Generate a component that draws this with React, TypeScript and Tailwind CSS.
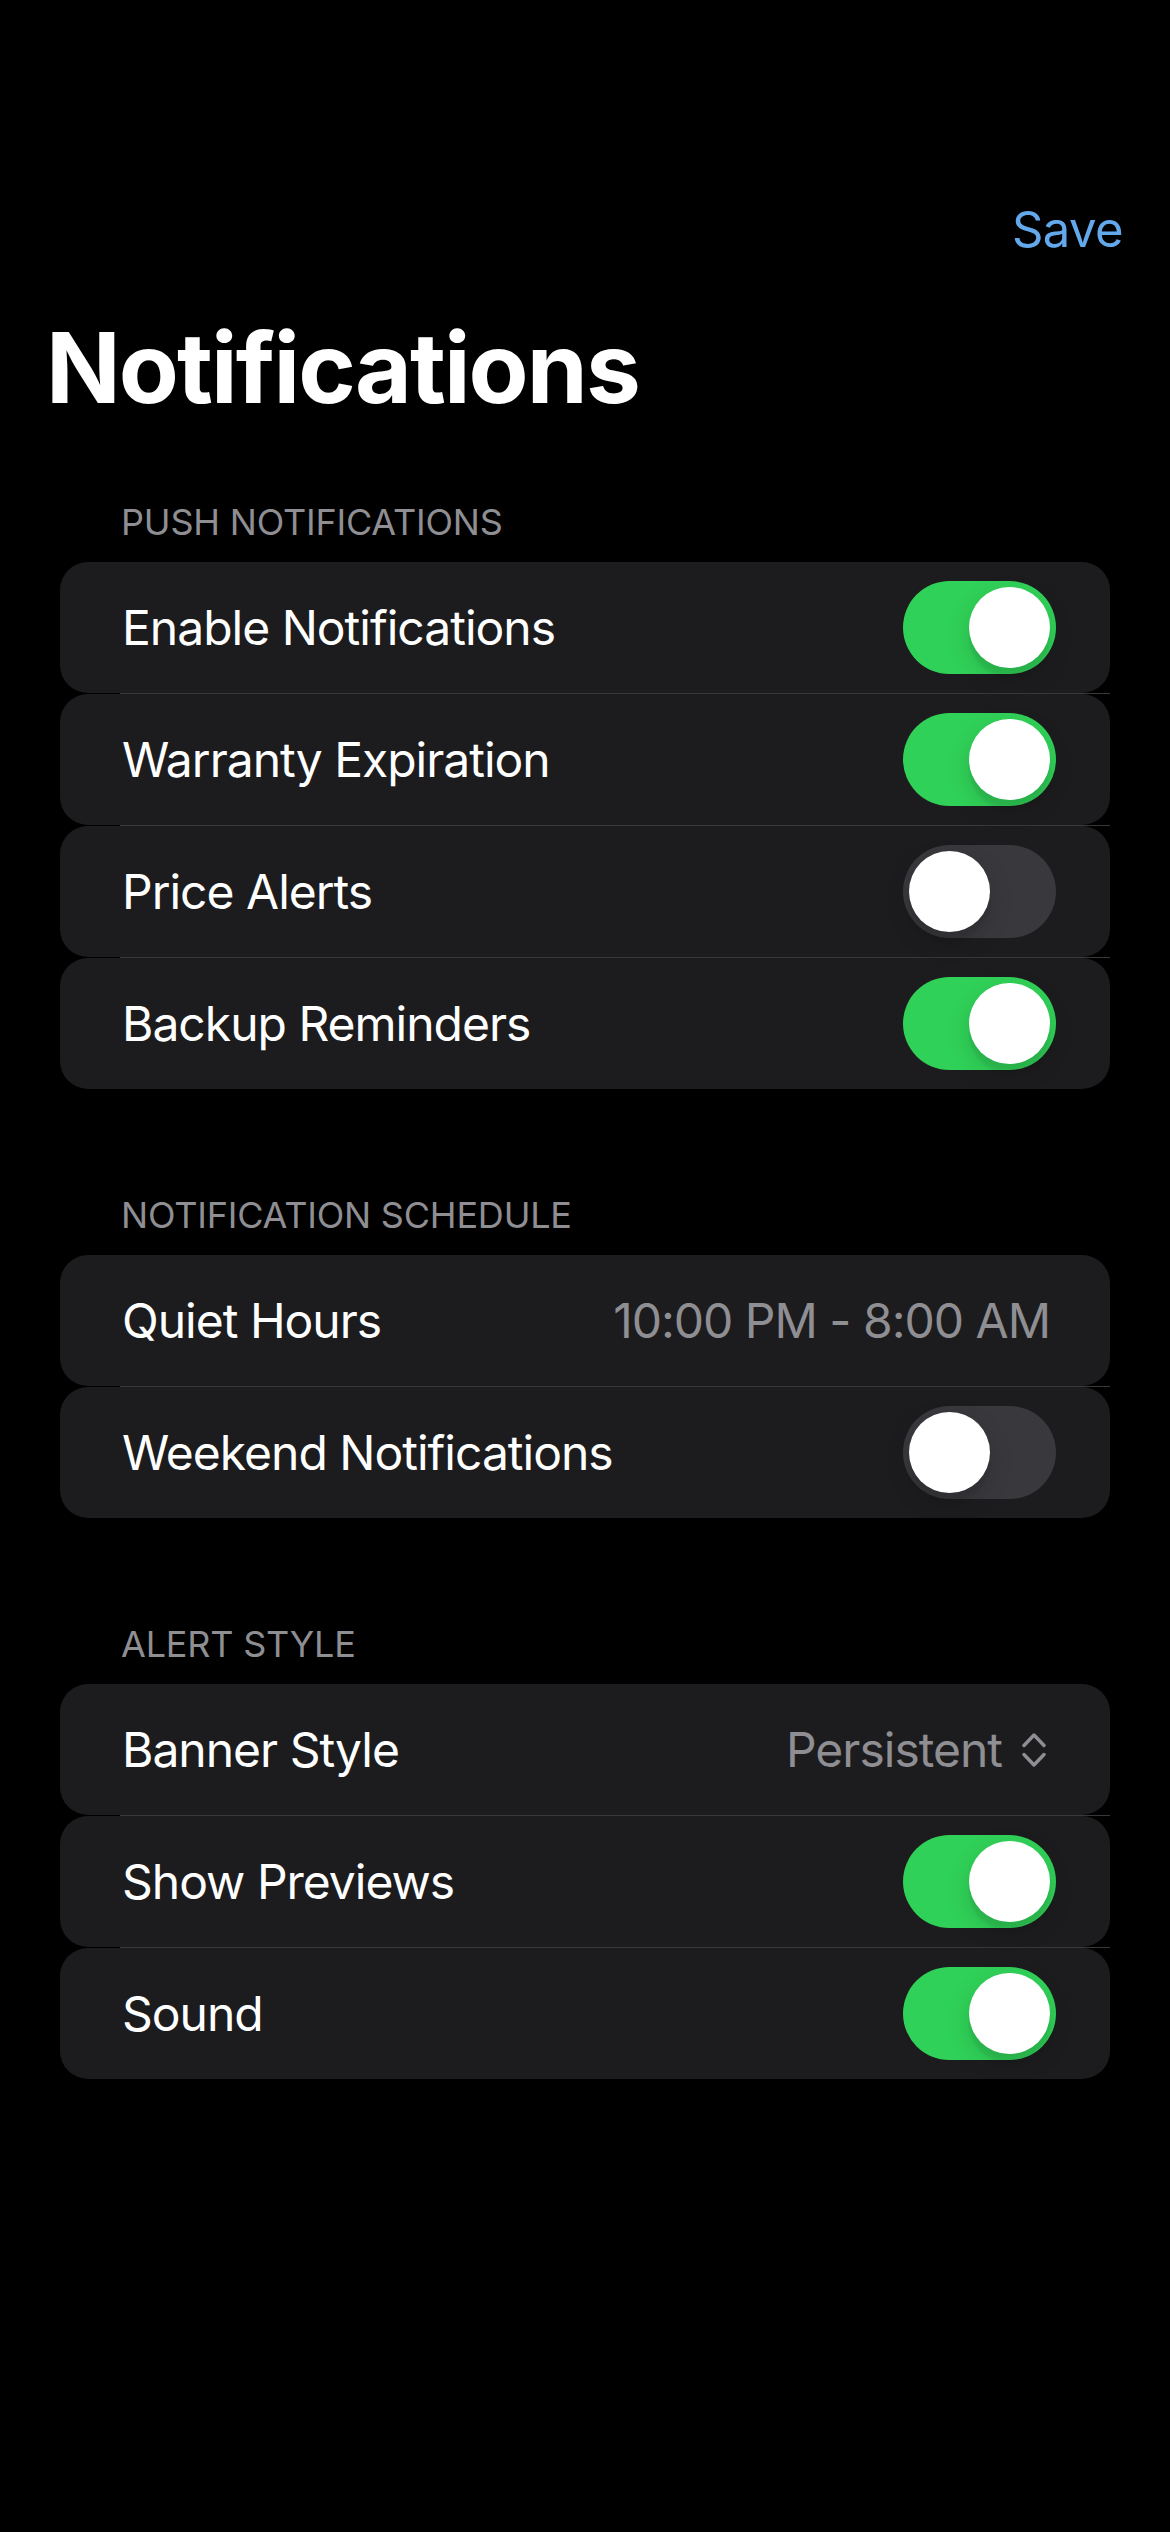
import { useState } from 'react'

type Row =
  | { kind: 'toggle'; label: string; on: boolean }
  | { kind: 'value'; label: string; value: string }
  | { kind: 'picker'; label: string; value: string }

const sections: { title: string; rows: Row[] }[] = [
  {
    title: 'PUSH NOTIFICATIONS',
    rows: [
      { kind: 'toggle', label: 'Enable Notifications', on: true },
      { kind: 'toggle', label: 'Warranty Expiration', on: true },
      { kind: 'toggle', label: 'Price Alerts', on: false },
      { kind: 'toggle', label: 'Backup Reminders', on: true },
    ],
  },
  {
    title: 'NOTIFICATION SCHEDULE',
    rows: [
      { kind: 'value', label: 'Quiet Hours', value: '10:00 PM - 8:00 AM' },
      { kind: 'toggle', label: 'Weekend Notifications', on: false },
    ],
  },
  {
    title: 'ALERT STYLE',
    rows: [
      { kind: 'picker', label: 'Banner Style', value: 'Persistent' },
      { kind: 'toggle', label: 'Show Previews', on: true },
      { kind: 'toggle', label: 'Sound', on: true },
    ],
  },
]

function Toggle({ initial }: { initial: boolean }) {
  const [on, setOn] = useState(initial)
  return (
    <button
      type="button"
      role="switch"
      aria-checked={on}
      onClick={() => setOn(!on)}
      className={'relative flex h-[93px] w-[153px] shrink-0 items-center rounded-full px-[6px] ' + (on ? 'justify-end bg-[#30d158]' : 'justify-start bg-[#39393d]')}
    >
      <span className="block h-[81px] w-[81px] rounded-full bg-white shadow-[0_9px_24px_rgba(0,0,0,0.15),0_9px_3px_rgba(0,0,0,0.06)]" />
    </button>
  )
}

function UpDownChevron() {
  return (
    <svg width="24" height="36" viewBox="0 0 24 36" fill="none" stroke="#8e8e93" strokeWidth="3.4" strokeLinecap="round" strokeLinejoin="round">
      <path d="M2 13.5 L12 3 L22 13.5" />
      <path d="M2 22.5 L12 33 L22 22.5" />
    </svg>
  )
}

function SettingsRow({ row }: { row: Row }) {
  const pr = row.kind === 'toggle' ? 'pr-[54px]' : row.kind === 'value' ? 'pr-[60px]' : 'pr-[64px]'
  return (
    <div className={'flex h-[131px] items-center justify-between rounded-[28px] bg-[#1c1c1e] pl-[62px] ' + pr}>
      <span className="text-[48px] leading-none tracking-[-1px] text-white">{row.label}</span>
      {row.kind === 'toggle' && <Toggle initial={row.on} />}
      {row.kind === 'value' && <span className="text-[48px] leading-none tracking-[-1px] text-[#8e8e93]">{row.value}</span>}
      {row.kind === 'picker' && (
        <div className="flex items-center gap-[20px]">
          <span className="text-[48px] leading-none tracking-[-1px] text-[#8e8e93]">{row.value}</span>
          <UpDownChevron />
        </div>
      )}
    </div>
  )
}

export default function App() {
  return (
    <div className="min-h-[2532px] w-full bg-black font-['Inter','Noto_Sans',sans-serif] antialiased">
      <div className="flex justify-end pr-[47px] pt-[200px]">
        <button type="button" className="text-[49px] leading-[60px] tracking-[-0.6px] text-[#64a8ec]">Save</button>
      </div>

      <h1 className="mt-[53px] pl-[46px] text-[98px] font-bold leading-[110px] tracking-[-1.9px] text-white">Notifications</h1>

      <div className="mt-[77px] flex flex-col gap-[104px] px-[60px]">
        {sections.map(section => (
          <section key={section.title}>
            <h2 className="mb-[18px] pl-[61px] text-[36px] leading-[44px] tracking-[-0.2px] text-[#8e8e93]">{section.title}</h2>
            <div className="flex flex-col">
              {section.rows.map((row, i) => (
                <div key={row.label}>
                  {i > 0 && <div className="ml-[60px] h-px bg-[#38383a]" />}
                  <SettingsRow row={row} />
                </div>
              ))}
            </div>
          </section>
        ))}
      </div>
    </div>
  )
}
